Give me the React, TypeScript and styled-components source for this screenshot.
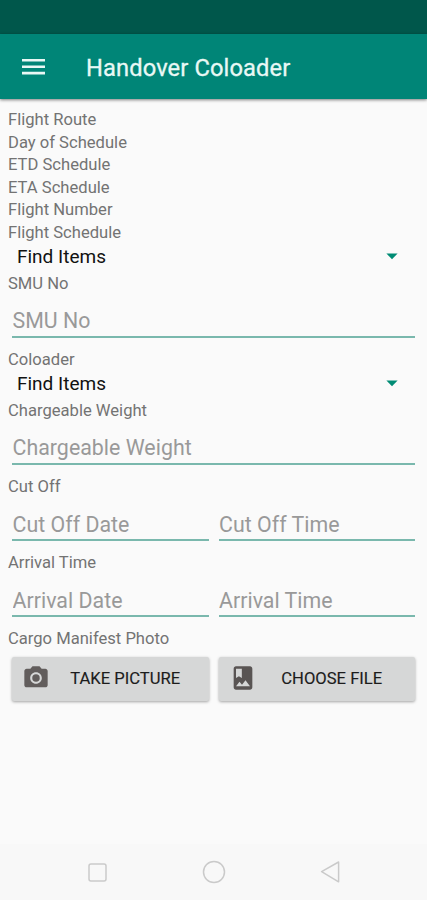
import React from 'react';
import styled, { createGlobalStyle } from 'styled-components';

const GlobalStyle = createGlobalStyle`
  * { box-sizing: border-box; }
  body {
    margin: 0;
    background: #fafafa;
    font-family: Roboto, "Noto Sans", sans-serif;
  }
`;

const Screen = styled.div`
  display: flex;
  flex-direction: column;
  width: 100%;
  height: 900px;
  background: #fafafa;
  overflow: hidden;
`;

const StatusBar = styled.div`
  flex: none;
  height: 34px;
  background: #00574b;
`;

const AppBar = styled.header`
  flex: none;
  display: flex;
  align-items: center;
  height: 65px;
  padding: 1px 0 0 22px;
  background: #008577;
  box-shadow: 0 1px 3px rgba(0, 0, 0, 0.5);
`;

const MenuButton = styled.button`
  display: flex;
  width: 64px;
  padding: 0;
  border: 0;
  background: none;
`;

const Title = styled.h1`
  margin: 0;
  padding-top: 2px;
  color: #e9f8f5;
  font-size: 23.7px;
  font-weight: 400;
  line-height: 28px;
  letter-spacing: 0.12px;
  -webkit-text-stroke: 0.3px #e9f8f5;
`;

const Form = styled.main`
  flex: 1;
  display: flex;
  flex-direction: column;
  padding: 9.4px 8px 0;
`;

const Label = styled.div`
  flex: none;
  height: 22.5px;
  color: #737373;
  font-size: 16.6px;
  line-height: 23.5px;
  white-space: nowrap;
`;

const Spinner = styled.div`
  flex: none;
  display: flex;
  align-items: center;
  justify-content: space-between;
  height: 28.5px;
  padding: 0 21px 1.5px 9px;
  color: #111;
  font-size: 19px;
`;

const FieldRow = styled.div`
  flex: none;
  display: flex;
  gap: 10px;
  height: 53.6px;
  padding: 11.5px 4px 10px;
`;

const Input = styled.input`
  flex: 1;
  min-width: 0;
  height: 32px;
  padding: 0 0 0 0.5px;
  border: 0;
  border-bottom: 2px solid #7ab8ad;
  outline: 0;
  border-radius: 0;
  background: transparent;
  font-family: inherit;
  font-size: 21.35px;
  letter-spacing: 0.02px;
  &::placeholder { color: #999; opacity: 1; }
`;

const ButtonRow = styled.div`
  display: flex;
  gap: 10px;
  padding: 7px 4px 0;
`;

const Button = styled.button`
  flex: 1;
  display: flex;
  align-items: center;
  height: 44px;
  padding: 0 10px 1px;
  border: 0;
  border-radius: 2px;
  background: #d6d7d7;
  box-shadow: 0 1px 3px rgba(0, 0, 0, 0.35);
  color: #1c1c1c;
  font-family: inherit;
  font-size: 16.6px;
  font-weight: 400;
  -webkit-text-stroke: 0.15px #1c1c1c;
`;

const ButtonText = styled.span`
  flex: 1;
  padding-left: 2px;
  text-align: center;
  white-space: nowrap;
`;

const NavBar = styled.nav`
  flex: none;
  display: flex;
  align-items: center;
  justify-content: space-between;
  height: 56px;
  padding: 0 85px;
  background: #f8f8f8;
`;

const MenuIcon = () => (
  <svg width="24" height="18" viewBox="0 0 24 18" fill="#e9f8f5">
    <path d="M0 1h23v2.6H0zM0 7.4h23v2.6H0zM0 13.8h23v2.6H0z" />
  </svg>
);

const Caret = () => (
  <svg width="12" height="7" viewBox="0 0 12 7">
    <path d="M.4 .5h11.2L6 6.2z" fill="#008b74" />
  </svg>
);

const CameraIcon = () => (
  <svg width="28" height="28" viewBox="0 0 24 24" fill="#625d5c">
    <circle cx="12" cy="12" r="3.2" />
    <path d="M9 2 7.17 4H4c-1.1 0-2 .9-2 2v12c0 1.1.9 2 2 2h16c1.1 0 2-.9 2-2V6c0-1.1-.9-2-2-2h-3.17L15 2H9zm3 15c-2.76 0-5-2.24-5-5s2.24-5 5-5 5 2.24 5 5-2.24 5-5 5z" />
  </svg>
);

const AlbumIcon = () => (
  <svg width="28" height="28" viewBox="0 0 24 24" fill="#595453">
    <path d="M18 2H6c-1.1 0-2 .9-2 2v16c0 1.1.9 2 2 2h12c1.1 0 2-.9 2-2V4c0-1.1-.9-2-2-2zM6 4h5v8l-2.5-1.5L6 12V4zm0 15 3-3.86 2.14 2.58 3-3.86L18 19H6z" />
  </svg>
);

const RecentsIcon = () => (
  <svg width="24" height="24" viewBox="0 0 24 24" fill="none" stroke="#cacaca" strokeWidth="1.5">
    <rect x="4" y="4" width="17" height="17" rx="2" />
  </svg>
);

const HomeIcon = () => (
  <svg width="24" height="24" viewBox="0 0 24 24" fill="none" stroke="#cacaca" strokeWidth="1.5">
    <circle cx="12" cy="12" r="10.5" />
  </svg>
);

const BackIcon = () => (
  <svg width="24" height="24" viewBox="0 0 24 24" fill="none" stroke="#cacaca" strokeWidth="1.5" strokeLinejoin="round">
    <path d="M3.6 11.6 20.6 2V21.8z" />
  </svg>
);

const flightLabels = [
  'Flight Route',
  'Day of Schedule',
  'ETD Schedule',
  'ETA Schedule',
  'Flight Number',
  'Flight Schedule',
];

const ItemSpinner = () => (
  <Spinner>
    <span>Find Items</span>
    <Caret />
  </Spinner>
);

const Fields = ({ label, hints }: { label: string; hints: string[] }) => (
  <>
    <Label>{label}</Label>
    <FieldRow>
      {hints.map((hint) => (
        <Input key={hint} placeholder={hint} aria-label={hint} />
      ))}
    </FieldRow>
  </>
);

export default function App() {
  return (
    <>
      <GlobalStyle />
      <Screen>
        <StatusBar />
        <AppBar>
          <MenuButton aria-label="Menu">
            <MenuIcon />
          </MenuButton>
          <Title>Handover Coloader</Title>
        </AppBar>
        <Form>
          {flightLabels.map((label) => (
            <Label key={label}>{label}</Label>
          ))}
          <ItemSpinner />
          <Fields label="SMU No" hints={['SMU No']} />
          <Label>Coloader</Label>
          <ItemSpinner />
          <Fields label="Chargeable Weight" hints={['Chargeable Weight']} />
          <Fields label="Cut Off" hints={['Cut Off Date', 'Cut Off Time']} />
          <Fields label="Arrival Time" hints={['Arrival Date', 'Arrival Time']} />
          <Label>Cargo Manifest Photo</Label>
          <ButtonRow>
            <Button>
              <CameraIcon />
              <ButtonText>TAKE PICTURE</ButtonText>
            </Button>
            <Button>
              <AlbumIcon />
              <ButtonText>CHOOSE FILE</ButtonText>
            </Button>
          </ButtonRow>
        </Form>
        <NavBar>
          <RecentsIcon />
          <HomeIcon />
          <BackIcon />
        </NavBar>
      </Screen>
    </>
  );
}
